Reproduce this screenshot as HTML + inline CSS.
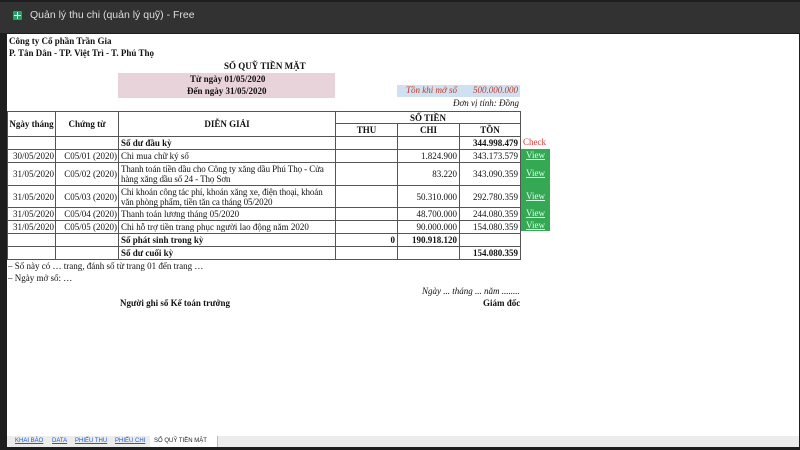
<!DOCTYPE html>
<html><head><meta charset="utf-8"><style>
*{margin:0;padding:0;box-sizing:border-box}
body{width:800px;height:450px;overflow:hidden;background:#1e1e1e;position:relative;font-family:"Liberation Serif",serif;font-size:9px;color:#111}
.t{position:absolute;white-space:nowrap}
.b{font-weight:bold}
#bar{position:absolute;left:0;top:2px;width:800px;height:31px;background:#323232}
#page{position:absolute;left:7px;top:34px;width:792px;height:402px;background:#fff}
#tabs{position:absolute;left:7px;top:436px;width:792px;height:11px;background:#ececec;font-family:"Liberation Sans",sans-serif;font-size:6px}
table{position:absolute;left:7px;top:111px;border-collapse:collapse;table-layout:fixed}
td{border:1px solid #555;padding:0 2px;line-height:10px;height:13px;vertical-align:middle;white-space:nowrap;overflow:hidden}
td.w{white-space:normal;letter-spacing:-0.1px}
.r{text-align:right}.c{text-align:center}
.v{position:absolute;left:521px;width:29px;background:#34a853;color:#dfe;text-decoration:underline;text-align:center}
</style></head><body>
<div id="bar"></div>
<div class="t" style="left:13px;top:11px;width:9px;height:9px;background:#1fa463;border-radius:1px"></div>
<div class="t" style="left:17px;top:12px;width:1px;height:7px;background:#fff"></div>
<div class="t" style="left:14px;top:15px;width:7px;height:1px;background:#fff"></div>
<div class="t" style="left:30px;top:9px;font-family:'Liberation Sans',sans-serif;font-size:10.5px;color:#ddd">Quản lý thu chi (quản lý quỹ) - Free</div>
<div id="page"></div>
<div class="t b" style="left:9px;top:36px">Công ty Cổ phần Trần Gia</div>
<div class="t b" style="left:9px;top:48px">P. Tân Dân - TP. Việt Trì - T. Phú Thọ</div>
<div class="t b" style="left:224px;top:61px">SỔ QUỸ TIỀN MẶT</div>
<div class="t" style="left:118px;top:73px;width:217px;height:25px;background:#e8d3db"></div>
<div class="t b" style="left:190px;top:74px">Từ ngày 01/05/2020</div>
<div class="t b" style="left:187px;top:86px">Đến ngày 31/05/2020</div>
<div class="t" style="left:397px;top:85px;width:123px;height:12px;background:#cfe0f0"></div>
<div class="t" style="left:406px;top:85px;color:#c0392b;font-style:italic">Tồn khi mở sổ</div>
<div class="t" style="left:473px;top:85px;color:#c0392b;font-style:italic">500.000.000</div>
<div class="t" style="left:453px;top:98px;font-style:italic">Đơn vị tính: Đồng</div>
<table>
<colgroup><col style="width:48px"><col style="width:63px"><col style="width:217px"><col style="width:62px"><col style="width:62px"><col style="width:61px"></colgroup>
<tr><td rowspan="2" class="b c" style="height:25px;padding:0">Ngày tháng</td><td rowspan="2" class="b c">Chứng từ</td><td rowspan="2" class="b c">DIỄN GIẢI</td><td colspan="3" class="b c" style="height:12px">SỐ TIỀN</td></tr>
<tr><td class="b c">THU</td><td class="b c">CHI</td><td class="b c">TỒN</td></tr>
<tr><td></td><td></td><td class="b">Số dư đầu kỳ</td><td></td><td></td><td class="b r">344.998.479</td></tr>
<tr><td class="r" style="padding:0 1px">30/05/2020</td><td class="r" style="padding:0 1px">C05/01 (2020)</td><td>Chi mua chữ ký số</td><td></td><td class="r">1.824.900</td><td class="r">343.173.579</td></tr>
<tr><td class="r" style="height:23px;padding:0 1px">31/05/2020</td><td class="r" style="padding:0 1px">C05/02 (2020)</td><td class="w">Thanh toán tiền dầu cho Công ty xăng dầu Phú Thọ - Cửa hàng xăng dầu số 24 - Thọ Sơn</td><td></td><td class="r">83.220</td><td class="r">343.090.359</td></tr>
<tr><td class="r" style="height:22px;padding:0 1px">31/05/2020</td><td class="r" style="padding:0 1px">C05/03 (2020)</td><td class="w">Chi khoán công tác phí, khoán xăng xe, điện thoại, khoán văn phòng phẩm, tiền tăn ca tháng 05/2020</td><td></td><td class="r">50.310.000</td><td class="r">292.780.359</td></tr>
<tr><td class="r" style="height:12px;padding:0 1px">31/05/2020</td><td class="r" style="padding:0 1px">C05/04 (2020)</td><td>Thanh toán lương tháng 05/2020</td><td></td><td class="r">48.700.000</td><td class="r">244.080.359</td></tr>
<tr><td class="r" style="height:12px;padding:0 1px">31/05/2020</td><td class="r" style="padding:0 1px">C05/05 (2020)</td><td>Chi hỗ trợ tiền trang phục người lao động năm 2020</td><td></td><td class="r">90.000.000</td><td class="r">154.080.359</td></tr>
<tr><td></td><td></td><td class="b">Số phát sinh trong kỳ</td><td class="b r">0</td><td class="b r">190.918.120</td><td></td></tr>
<tr><td></td><td></td><td class="b">Số dư cuối kỳ</td><td></td><td></td><td class="b r">154.080.359</td></tr>
</table>
<div class="t" style="left:523px;top:137px;color:#e53935">Check</div>
<div class="t v" style="top:149px;height:13px;line-height:13px">View</div>
<div class="t v" style="top:162px;height:23px;line-height:23px">View</div>
<div class="t v" style="top:185px;height:22px;line-height:22px">View</div>
<div class="t v" style="top:207px;height:12px;line-height:12px">View</div>
<div class="t v" style="top:219px;height:12px;line-height:12px">View</div>
<div class="t" style="left:8px;top:261px">– Số này có … trang, đánh số từ trang 01 đến trang …</div>
<div class="t" style="left:8px;top:273px">– Ngày mở số: …</div>
<div class="t" style="left:422px;top:286px;font-style:italic">Ngày ... tháng ... năm ........</div>
<div class="t b" style="left:120px;top:298px">Người ghi sổ Kế toán trưởng</div>
<div class="t b" style="left:483px;top:298px">Giám đốc</div>
<div id="tabs">
<span class="t" style="left:8px;top:2px;color:#1a5bd6;text-decoration:underline">KHAI BÁO</span>
<span class="t" style="left:45px;top:2px;color:#1a5bd6;text-decoration:underline">DATA</span>
<span class="t" style="left:68px;top:2px;color:#1a5bd6;text-decoration:underline">PHIẾU THU</span>
<span class="t" style="left:108px;top:2px;color:#1a5bd6;text-decoration:underline">PHIẾU CHI</span>
<span class="t" style="left:143px;top:0;height:11px;width:68px;background:#fff;border-right:1px solid #bbb"></span>
<span class="t" style="left:147px;top:2px;color:#222">SỔ QUỸ TIỀN MẶT</span>
</div>
</body></html>
